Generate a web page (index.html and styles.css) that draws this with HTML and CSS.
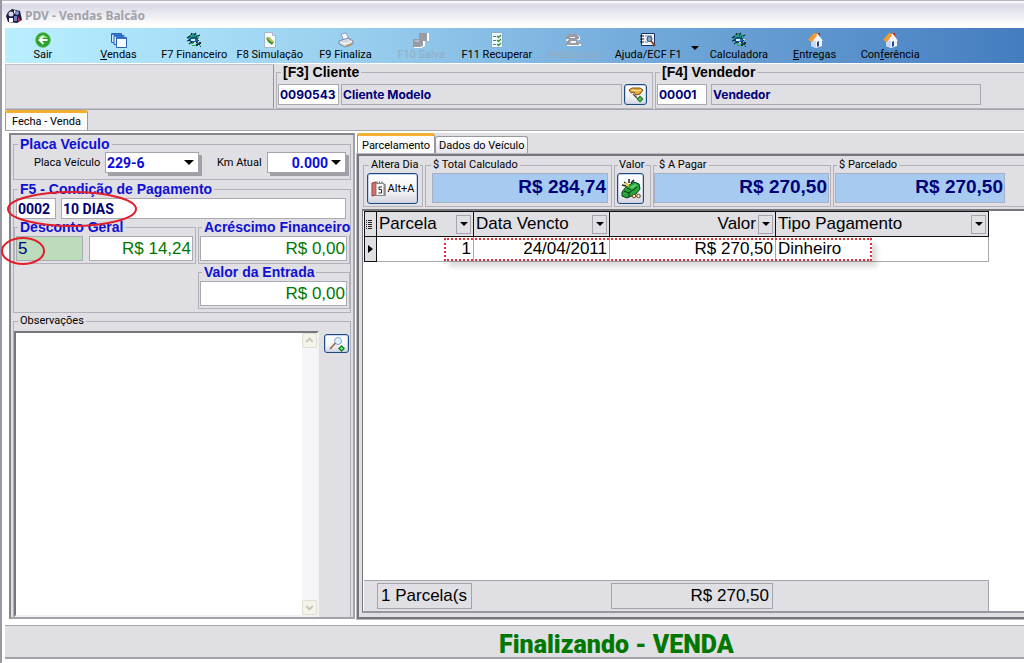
FILE: index.html
```html
<!DOCTYPE html>
<html lang="pt-BR">
<head>
<meta charset="utf-8">
<title>PDV - Vendas Balcão</title>
<link rel="stylesheet" href="styles.css">
</head>
<body>
<svg class="sprite" aria-hidden="true">
  <symbol id="i-cash" viewBox="0 0 16 16">
    <path d="M3 4l4-3 6 3-1 4-8 2-2-3z" fill="#1c9a92"/>
    <path d="M1 6l3-2M5 3l1-2M8 3l2-2M10 5l4-2M1 9l3-1M3 12l3-2M10 10l4 3" stroke="#10232e" stroke-width="1.3"/>
    <path d="M3 8q4-5 10 0-4 5-10 0z" fill="#2468d0" stroke="#082848"/>
    <path d="M5 7h4v2H5z" fill="#c8f4ff"/>
    <path d="M4 11h3v1H4zM6 13h4v1H6zM11 4h2v1h-2zM4 3h2v1H4z" fill="#22b040"/>
    <path d="M10 12h2v2h-2zM13 10h2v2h-2zM14 14h1v1h-1z" fill="#0c3a30"/>
    <path d="M12 7h2v1h-2zM8 10h2v1H8z" fill="#f0e8a0"/>
  </symbol>
  <symbol id="i-house" viewBox="0 0 16 16">
    <path d="M10 1h3v6h-3z" fill="#b32a1c"/>
    <path d="M4 8l6-5 5 6v5l-6 2-5-2z" fill="#f2f5ff"/>
    <path d="M4 8v6l5 2V9z" fill="#c9d8f5"/>
    <path d="M1 8l6-7 4 1-6 8z" fill="#f79a2c"/>
    <path d="M10 2l5 7" stroke="#fff" stroke-width="1.5"/>
    <path d="M10 10l2-1v5l-2 1z" fill="#28477e"/>
  </symbol>
</svg>

<div class="window">
  <header class="titlebar">
    <svg class="icon" viewBox="0 0 16 16" aria-hidden="true"><path d="M2 4l4-3 8 2 2 9-5 3-9-1-2-6z" fill="#1b1d42"/><circle cx="5" cy="6" r="2.5" fill="#d5d9f0"/><circle cx="11" cy="5" r="2" fill="#8794cc"/><path d="M3 10h4v4H3z" fill="#fff"/><path d="M8 8h3v5H8z" fill="#6b7cc0"/><path d="M12 8l3 5h-3z" fill="#b23143"/><path d="M8 2l2 1-2 3z" fill="#f3f3ff"/></svg>
    <h1>PDV - Vendas Balcão</h1>
  </header>

  <nav class="toolbar" aria-label="Principal">
    <div class="tools tools-main">
      <button type="button"><svg class="icon" viewBox="0 0 16 16"><circle cx="8" cy="8" r="7.3" fill="#27a32a" stroke="#5fb45c"/><path d="M3 6q5-6 10 0z" fill="#83db6c"/><path d="M8.500 4L4.500 8l4 4M5 8h7.500" fill="none" stroke="#fff" stroke-width="2"/></svg>Sair</button>
      <button type="button"><svg class="icon" viewBox="0 0 16 16"><g fill="#cfeaff" stroke="#2760b8"><path d="M.5 1.500h10v9H.5z"/><path d="M3 3.500h10v9H3z"/><path d="M5.500 5.500h10v10h-10z" fill="#f3fbff"/></g><path d="M1 2.500h9M3.500 4.500h9M6 6.500h9" stroke="#3d7bd4"/></svg><span><u>V</u>endas</span></button>
      <button type="button"><svg class="icon"><use href="#i-cash"/></svg>F7 Financeiro</button>
      <button type="button"><svg class="icon" viewBox="0 0 16 16"><path d="M2.500 .5h8l3 3v12h-11z" fill="#f8fbff" stroke="#a3b8d0"/><path d="M10.500 .5v3h3" fill="#d4e0ee" stroke="#a3b8d0"/><path d="M4 6l3-1 5 5-2 3-4-3z" fill="#3c9a38"/><path d="M6 6l5 4" stroke="#e8c64c" stroke-width="1.500"/></svg>F8 Simulação</button>
      <button type="button"><svg class="icon" viewBox="0 0 16 16"><path d="M3 2l5-1 3 6-5 2z" fill="#f7f9ff" stroke="#8c9fc6"/><path d="M1 9l9-3 5 3v3l-8 3-6-3z" fill="#d5d9e4" stroke="#7e869b"/><path d="M2 10l6 2 6-3" fill="none" stroke="#fff"/><path d="M8 13l6-2v2l-5 2z" fill="#a99f68"/></svg>F9 Finaliza</button>
      <button type="button" disabled><svg class="icon" viewBox="0 0 16 16"><path d="M7 1h9v8h-4v5l-4 2H1V8h5z" fill="#fff"/><path d="M6 1h8v8h-4v5l-3 1H0V7h6z" fill="#9a9ca5"/><path d="M2 8h4v2H2z" fill="#b8bac2"/></svg>F10 Salva</button>
      <button type="button"><svg class="icon" viewBox="0 0 16 16"><path d="M2.500 .5h11v15h-11z" fill="#f4fbff" stroke="#86add2"/><path d="M4 4.500h3M4 8.500h3M4 12.500h3" stroke="#4b79b5"/><path d="M8 4l1.500 1.500L12 3M8 8l1.500 1.500L12 7M8 12l1.500 1.500L12 11" fill="none" stroke="#2b963b" stroke-width="1.300"/></svg>F11 Recuperar</button>
      <button type="button" disabled><svg class="icon" viewBox="0 0 16 16"><path d="M3 4l3-2h6l3 3v3h-2l1 4h2v2H2v-2l2-3H1z" fill="#fff"/><path d="M2 4l2-2h8l2 3v2h-2l2 4v2H1v-2l3-4H0z" fill="#9a9ca5"/><path d="M5 5h5v1H5zM6 9h5v2H5z" fill="#eef3fa"/></svg>Relacionar</button>
      <button type="button"><svg class="icon" viewBox="0 0 16 16"><path d="M1.500 1.500h13v12h-13z" fill="#f6f9ff" stroke="#17346e"/><path d="M0 4h4M0 7h4M0 10h4" stroke="#111"/><path d="M5 4h7M5 10h3" stroke="#5270b8"/><circle cx="9.500" cy="7" r="2.500" fill="#88a6c8" stroke="#33415c"/><path d="M11 9l4 5" stroke="#8b3e22" stroke-width="2"/></svg>Ajuda/ECF F1</button>
    </div>
    <button class="more" type="button" aria-label="Mais opções de ajuda"><span class="arrow"></span></button>
    <div class="tools tools-extra">
      <button type="button"><svg class="icon"><use href="#i-cash"/></svg>Calculadora</button>
      <button type="button"><svg class="icon"><use href="#i-house"/></svg><span><u>E</u>ntregas</span></button>
      <button type="button"><svg class="icon"><use href="#i-house"/></svg><span>Con<u>f</u>erência</span></button>
    </div>
  </nav>

  <section class="parties">
    <div class="blank"></div>
    <fieldset class="client">
      <legend>[F3] Cliente</legend>
      <div class="line">
        <input class="code" aria-label="Código do cliente" value="0090543">
        <input class="name" aria-label="Nome do cliente" value="Cliente Modelo" readonly>
        <button class="xp find" type="button" aria-label="Buscar cliente"><svg class="icon" viewBox="0 0 16 16"><path d="M1 3l3-2h8l3 2-3 4-4 1-2-3-3 1z" fill="#e7a834" stroke="#805018"/><path d="M4 3l5 1 4-1" stroke="#fff0a8" fill="none"/><path d="M5 7l4 4" stroke="#604430" stroke-width="1.500"/><path d="M12 8.500l3.500 3.500-3.500 3.500L8.500 12z" fill="#177c26"/><path d="M10.500 12h3M12 10.500v3" stroke="#7be07b"/></svg></button>
      </div>
    </fieldset>
    <fieldset class="seller">
      <legend>[F4] Vendedor</legend>
      <div class="line">
        <input class="code" aria-label="Código do vendedor" value="00001">
        <input class="name" aria-label="Nome do vendedor" value="Vendedor" readonly>
      </div>
    </fieldset>
  </section>

  <div class="tabs tabs-outer"><button class="tab active" type="button">Fecha - Venda</button></div>

  <main class="page">
    <section class="sale">
      <fieldset class="vehicle">
        <legend>Placa Veículo</legend>
        <div class="vehicle-line">
          <label for="plate">Placa Veículo</label>
          <span class="combo"><select id="plate"><option>229-6</option></select><span class="arrow"></span></span>
          <label class="km-label" for="km">Km Atual</label>
          <span class="combo km"><select id="km"><option>0.000</option></select><span class="arrow"></span></span>
        </div>
      </fieldset>

      <fieldset class="terms">
        <legend>F5 - Condição de Pagamento</legend>
        <div class="line term-line">
          <input class="term-code" aria-label="Código da condição" value="0002">
          <input class="term-name" aria-label="Condição de pagamento" value="10 DIAS">
        </div>
        <div class="amounts">
          <fieldset class="discount">
            <legend>Desconto Geral</legend>
            <div class="line">
              <input class="percent" aria-label="Desconto em percentual" value="5">
              <input class="money" aria-label="Desconto em valor" value="R$ 14,24">
            </div>
          </fieldset>
          <fieldset class="extra">
            <legend>Acréscimo Financeiro</legend>
            <input class="money" aria-label="Acréscimo financeiro" value="R$ 0,00">
          </fieldset>
          <fieldset class="extra entry">
            <legend>Valor da Entrada</legend>
            <input class="money" aria-label="Valor da entrada" value="R$ 0,00">
          </fieldset>
        </div>
      </fieldset>

      <fieldset class="notes">
        <legend>Observações</legend>
        <div class="notes-body">
          <div class="memo">
            <textarea aria-label="Observações"></textarea>
            <div class="scroll" aria-hidden="true">
              <svg viewBox="0 0 14 14"><path d="M3.500 8.500L7 5l3.500 3.500" fill="none" stroke="#c4c4b8" stroke-width="2"/></svg>
              <svg viewBox="0 0 14 14"><path d="M3.500 5.500L7 9l3.500-3.500" fill="none" stroke="#c4c4b8" stroke-width="2"/></svg>
            </div>
          </div>
          <button class="xp lookup" type="button" aria-label="Buscar observação"><svg class="icon" viewBox="0 0 16 16"><circle cx="9" cy="5" r="3.500" fill="#e2f0fb" stroke="#8ba6c4"/><path d="M6.500 7L1 13" stroke="#96705c" stroke-width="1.800"/><path d="M12.500 9l3.500 3.500-3.500 3.500L9 12.500z" fill="#148a20"/><path d="M11 12.500h3M12.500 11v3" stroke="#7be07b"/></svg></button>
        </div>
      </fieldset>

      <svg class="marks" viewBox="0 0 346 485" aria-hidden="true"><ellipse cx="63" cy="76" rx="64" ry="17"/><ellipse cx="14" cy="118" rx="21" ry="13"/></svg>
    </section>

    <section class="payment">
      <div class="tabs tabs-inner">
        <button class="tab active" type="button">Parcelamento</button>
        <button class="tab" type="button">Dados do Veículo</button>
      </div>
      <div class="sheet">
        <div class="totals">
          <fieldset class="alter"><legend>Altera Dia</legend><button class="xp" type="button"><svg class="icon" viewBox="0 0 16 16"><path d="M1 2l4-1v13l-4 1z" fill="#d87070" stroke="#844"/><path d="M5 2.500h8v12H5z" fill="#f8f8f8" stroke="#898989"/><path d="M6 2V.5M8.500 2V.5M11 2V.5M14 3v12" stroke="#555"/><path d="M11 6H8v2.500h2.500V12H7.500" fill="none" stroke="#333"/></svg>Alt+A</button></fieldset>
          <fieldset class="total"><legend>$ Total Calculado</legend><output>R$ 284,74</output></fieldset>
          <fieldset class="value"><legend>Valor</legend><button class="xp" type="button" aria-label="Valor"><svg class="icon big" viewBox="0 0 20 20"><path d="M1 13l4-5 8-5 5 2 1 5-4 5-9 4-5-2z" fill="#28a43c" stroke="#083c18"/><path d="M3 12l5 2 8-6M8 14v4M6 9l4 2" fill="none" stroke="#063b18"/><path d="M3 3l3 2M8 0v4M1 6l4 1M13 1l-3 3" stroke="#222" stroke-width="1.500"/><path d="M4 4l4 3" stroke="#e8d020" stroke-width="2"/><path d="M9 8l5-3 2 1-5 4z" fill="#62d070"/><circle cx="13" cy="17" r="1.800" fill="#f6e7b5" stroke="#69491e"/><circle cx="17.500" cy="17" r="1.800" fill="#f6e7b5" stroke="#69491e"/></svg></button></fieldset>
          <fieldset class="due"><legend>$ A Pagar</legend><output>R$ 270,50</output></fieldset>
          <fieldset class="split"><legend>$ Parcelado</legend><output>R$ 270,50</output></fieldset>
        </div>
        <div class="grid">
          <div class="grid-body">
            <table>
              <colgroup><col class="c-mark"><col class="c-no"><col class="c-date"><col class="c-value"><col class="c-type"></colgroup>
              <thead><tr>
                <th><svg class="rows" viewBox="0 0 7 11" aria-hidden="true"><path d="M0 1.500h1m1 0h4M0 3.500h1m1 0h4M0 5.500h1m1 0h4M0 7.500h1m1 0h4M0 9.500h1m1 0h4" stroke="#222"/></svg></th>
                <th><div class="head"><span>Parcela</span><button type="button" aria-label="Filtrar parcela"><span class="arrow"></span></button></div></th>
                <th><div class="head"><span>Data Vencto</span><button type="button" aria-label="Filtrar data"><span class="arrow"></span></button></div></th>
                <th><div class="head right"><span>Valor</span><button type="button" aria-label="Filtrar valor"><span class="arrow"></span></button></div></th>
                <th><div class="head"><span>Tipo Pagamento</span><button type="button" aria-label="Filtrar tipo"><span class="arrow"></span></button></div></th>
              </tr></thead>
              <tbody><tr>
                <td class="current"><span class="pointer"></span></td><td class="num">1</td><td class="num">24/04/2011</td><td class="num">R$ 270,50</td><td>Dinheiro</td>
              </tr></tbody>
            </table>
            <div class="highlight"></div>
          </div>
          <div class="summary">
            <output class="count">1 Parcela(s</output>
            <output class="sum">R$ 270,50</output>
          </div>
        </div>
      </div>
    </section>
  </main>

  <footer class="status">Finalizando - VENDA</footer>
</div>
</body>
</html>
```

FILE: styles.css
```css
* { box-sizing: border-box; }

:root {
  --face: #e0dfe3;
  --line: #b2b1ba;
  --dark: #85858c;
  --navy: #000078;
  --blue: #1010d4;
  --green: #007800;
}

body {
  margin: 0;
  overflow: hidden;
  background: #fff;
  color: #000;
  font: 11px/13px Roboto, "Liberation Sans", sans-serif;
}

button, input, select, textarea { font: inherit; color: inherit; margin: 0; border-radius: 0; }
button { padding: 0; border: 0; background: none; }
fieldset { min-width: 0; margin: 0; padding: 0; border: 1px solid var(--line); }
legend { height: 16px; margin-left: 4px; padding: 0 2px; line-height: 16px; white-space: nowrap; }
label { white-space: nowrap; }
input { height: 21px; min-width: 0; padding: 0 1px; border: 1px solid #aaa9b2; background: #fff; }
.sprite { position: absolute; width: 0; height: 0; }
.icon { width: 16px; height: 16px; flex: none; }
.line { display: flex; }
.arrow { width: 0; height: 0; border: 4px solid transparent; border-top-color: #000; border-bottom: 0; }

.window {
  display: flex;
  flex-direction: column;
  min-height: 100vh;
  padding-bottom: 4px;
  border-left: 2px solid #9897a3;
  background: #fff;
}

.titlebar {
  display: flex;
  align-items: center;
  gap: 3px;
  height: 28px;
  padding: 3px 4px 0;
  border-top: 1px solid #b5b4c0;
  background: linear-gradient(#fff 0, #d9d9e6 4px, #e8e8f0 12px, #fff 24px);
}
.titlebar h1 { margin: 0; color: #a1a1a8; font: bold 12px/16px "Noto Sans", sans-serif; }

.toolbar {
  display: flex;
  height: 35px;
  margin-left: 3px;
  background: linear-gradient(90deg, #b9efff, #9ad0ef 33%, #70a7d9 65%, #447dbf);
}
.tools { display: flex; }
.tools-main { width: 681px; }
.tools-extra { width: 227px; }
.tools button {
  display: flex;
  flex: 1;
  flex-direction: column;
  align-items: center;
  padding-top: 4px;
  white-space: nowrap;
}
.tools button:disabled { color: #94acbf; }
.more { width: 15px; padding: 4px 0 0 5px; }
.more .arrow { display: block; }

.parties {
  display: grid;
  grid-template-columns: 269px 377px 1fr;
  gap: 2px;
  height: 46px;
  margin: 1px 0 0 3px;
  border-bottom: 1px solid #a4a3ab;
  background: var(--face);
}
.blank { border: 1px solid #c4c3ca; border-right-color: #96959d; }
.parties legend { font: bold 14px/16px "Liberation Sans", sans-serif; }
.parties .line { padding: 4px 5px 3px 1px; }
.parties input { color: var(--navy); font: bold 12px/16px Inter, sans-serif; }
.parties .name { background: var(--face); }
.client .code { width: 61px; margin-right: 2px; }
.client .name { flex: 1; }
.seller { border-right: 0; }
.seller .line { gap: 4px; }
.seller .code { width: 50px; }
.seller .name { flex: 0 1 270px; }

.xp {
  display: flex;
  align-items: center;
  justify-content: center;
  border: 1px solid #1f4a80;
  border-radius: 3px;
  background: linear-gradient(#fff, #f3f3f7 60%, #d6d5e0);
  box-shadow: inset 0 0 0 1px #c3d3ea;
}
.find { width: 23px; height: 21px; margin-left: 2px; }

.tabs { display: flex; align-items: flex-end; }
.tab {
  height: 18px;
  padding: 0 6px;
  border: 1px solid #99989f;
  border-bottom: 0;
  border-radius: 3px 3px 0 0;
  background: linear-gradient(#fff, #e3e3ea);
}
.tab.active { height: 20px; border-top: 3px solid #f4ae32; background: #fbfbfc; }
.tabs-outer { height: 21px; margin-left: 3px; background: var(--face); border-bottom: 1px solid #a9a8af; }

.page {
  display: flex;
  flex: 1;
  gap: 2px;
  min-height: 0;
  margin-left: 3px;
  padding: 2px 0 6px 4px;
  background: #fff;
}

.sale {
  position: relative;
  display: flex;
  flex-direction: column;
  flex: none;
  width: 346px;
  padding: 1px 2px 0;
  border: 2px solid var(--dark);
  border-right-color: #a3a2a9;
  border-bottom-color: #a3a2a9;
  background: var(--face);
}
.vehicle > legend, .terms legend { color: var(--blue); font: bold 14px/16px "Liberation Sans", sans-serif; }
.vehicle { margin-bottom: 1px; }
.vehicle-line {
  display: grid;
  grid-template-columns: 71px 94px 68px 79px;
  align-items: center;
  padding: 0 0 6px 20px;
}
.km-label { padding-left: 18px; }
.combo {
  display: flex;
  align-items: center;
  height: 21px;
  padding-right: 4px;
  border: 1px solid #a5a4ac;
  background: #fff;
  box-shadow: 3px 3px 0 #a1a0a8;
}
.combo select {
  flex: 1;
  min-width: 0;
  padding: 0 1px;
  border: 0;
  appearance: none;
  background: none;
  color: #0a0ae0;
  font: bold 14px/18px Roboto, sans-serif;
}
.combo .arrow { border-width: 5px; border-bottom: 0; }
.km select { padding-right: 3px; text-align-last: right; }

.terms { padding-bottom: 3px; }
.term-line { gap: 5px; padding: 1px 4px 0 2px; }
.term-line input { color: var(--navy); font: bold 14px/16px Roboto, sans-serif; }
.term-code { width: 40px; }
.term-name { flex: 1; }
.amounts { display: grid; grid-template-columns: 182px 1fr; gap: 0 2px; }
.amounts legend { margin-left: 2px; }
.discount, .extra { padding: 1px 2px 2px 1px; }
.discount .line { gap: 6px; }
.amounts input { height: 25px; color: var(--green); font: 17px/20px "Liberation Sans", sans-serif; }
.money { width: 100%; text-align: right; }
.discount .money { flex: 1; }
.amounts .percent { width: 67px; color: var(--navy); background: #bcdcbc; }
.entry { grid-column: 2; }

.notes { display: flex; flex: 1; flex-direction: column; border-bottom: 0; }
.notes-body { display: flex; flex: 1; gap: 5px; padding: 2px 1px 0 0; }
.memo { display: flex; flex: 1; border: 2px solid #77767d; border-right-color: #f2f2f4; border-bottom-color: #f2f2f4; background: #fff; }
.memo textarea { flex: 1; min-width: 0; border: 0; resize: none; background: #fff; }
.scroll { display: flex; flex-direction: column; justify-content: space-between; width: 15px; background: #f5f5fa; }
.scroll svg { width: 15px; height: 15px; border: 1px solid #e1e0d2; border-radius: 2px; background: #f5f4ea; }
.lookup { width: 25px; height: 19px; margin-top: 3px; }

/* Hand-drawn circles over the payment terms and discount */
.marks { position: absolute; top: -2px; left: -2px; width: 346px; height: 485px; overflow: visible; pointer-events: none; }
.marks ellipse { fill: none; stroke: #e0202c; stroke-width: 2; }

.payment { display: flex; flex: 1; flex-direction: column; min-width: 0; }
.tabs-inner { height: 21px; background: var(--face); }
.tabs-inner .tab { padding: 0 3px; }
.tabs-inner .active { height: 21px; padding: 0 4px; }
.sheet {
  display: flex;
  flex: 1;
  flex-direction: column;
  padding: 1px 0 4px 3px;
  border: 2px solid #77767d;
  border-right: 0;
  outline: 1px solid #b9b8bf;
  background: var(--face);
}
.totals { display: grid; grid-template-columns: 60px 187px 37px 178px 1fr; gap: 2px; padding-left: 1px; }
.totals fieldset { padding: 0 2px 2px; }
.totals legend { margin-left: 3px; }
.totals .xp { height: 31px; }
.alter .xp { width: 51px; gap: 1px; margin-left: 1px; }
.value .xp { width: 27px; }
.totals .value legend { margin-left: 1px; padding: 0 1px; }
.icon.big { width: 20px; height: 20px; }
.totals output {
  display: block;
  height: 30px;
  padding-right: 1px;
  border: 1px solid #a9b0c4;
  background: #a6caf0;
  color: var(--navy);
  font: bold 19px/26px "Liberation Sans", sans-serif;
  text-align: right;
}
.total output { margin: 0 1px 0 4px; }
.totals .due, .totals .split { padding-left: 0; padding-right: 1px; }
.split { border-right: 0; }
.split output { max-width: 170px; margin-left: 1px; }

.grid {
  display: flex;
  flex: 1;
  flex-direction: column;
  margin-top: 2px;
  padding-left: 1px;
  border-top: 2px solid #77767d;
  border-left: 1px solid #77767d;
  border-bottom: 2px solid #98979f;
  background: #fff;
  font: 17px/20px "Liberation Sans", sans-serif;
}
.grid-body { position: relative; flex: 1; }
table { width: 625px; table-layout: fixed; border-collapse: collapse; }
.c-mark { width: 12px; }
.c-no { width: 97px; }
.c-date { width: 136px; }
.c-value { width: 166px; }
th, td { height: 25px; padding: 0 2px; }
th { border: 1px solid #111; background: var(--face); font-weight: normal; text-align: left; }
td { border: 1px solid #aaa; }
th:first-child, td:first-child { padding: 0 1px; }
.rows { display: block; width: 7px; height: 11px; }
.head { display: flex; align-items: center; justify-content: space-between; white-space: nowrap; }
.head.right { justify-content: flex-end; gap: 2px; }
.head button { display: flex; align-items: center; justify-content: center; width: 15px; height: 19px; border: 1px solid #a7a6ae; }
.num { text-align: right; }
.current { border-color: #111; background: var(--face); }
.pointer { display: block; width: 0; height: 0; margin-left: 2px; border: 4px solid transparent; border-left: 5px solid #000; border-right: 0; }
.highlight {
  position: absolute;
  top: 27px;
  left: 80px;
  width: 428px;
  height: 23px;
  border: 2px dotted #e0303a;
  box-shadow: 5px 6px 5px rgba(0, 0, 0, .14);
}

.summary {
  display: flex;
  justify-content: space-between;
  width: 625px;
  padding: 2px 215px 2px 13px;
  border: 1px solid #a5a4ac;
  border-left: 0;
  border-bottom: 0;
  background: var(--face);
}
.summary output { height: 26px; padding: 0 3px; border: 1px solid #a5a4ac; line-height: 24px; white-space: nowrap; }
.count { width: 95px; }
.sum { width: 162px; text-align: right; }

.status {
  height: 34px;
  margin-left: 3px;
  padding-left: 494px;
  border-top: 1px solid #a3a2a9;
  border-bottom: 2px solid #a3a2a9;
  background: var(--face);
  color: var(--green);
  font: 900 25px/38px Roboto, sans-serif;
}
```
